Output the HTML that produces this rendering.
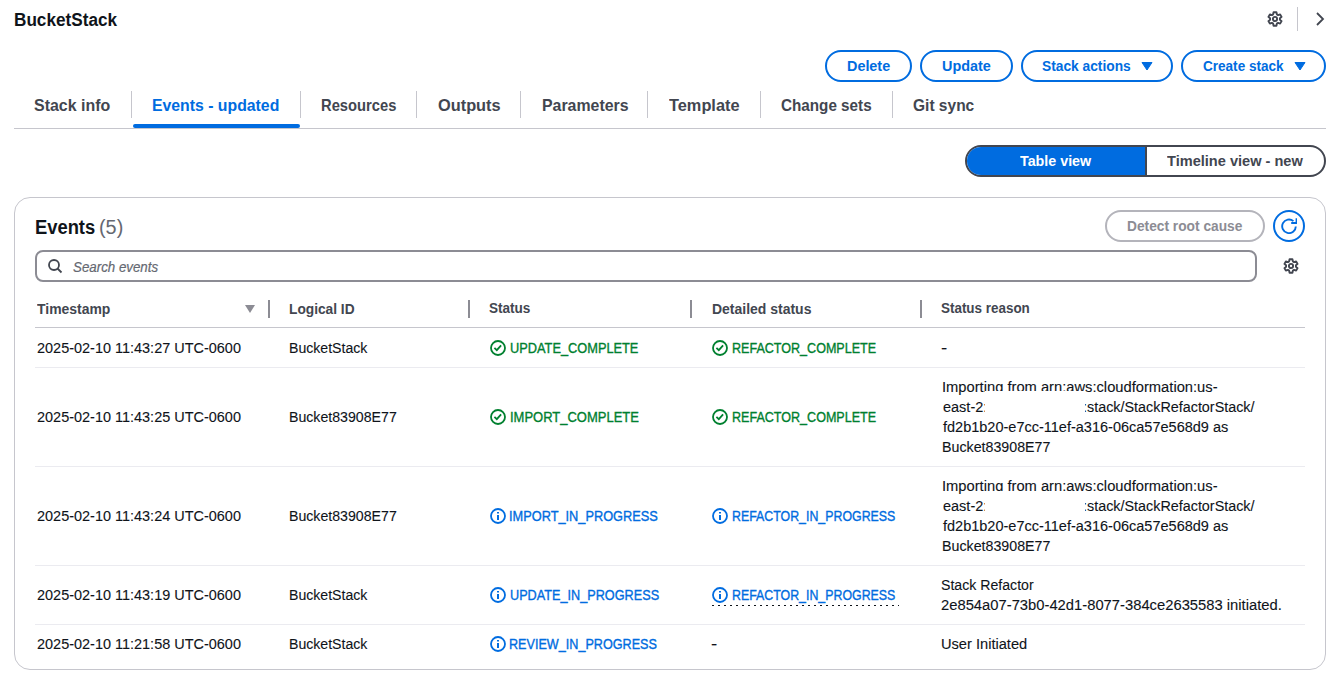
<!DOCTYPE html>
<html><head><meta charset="utf-8">
<style>
*{box-sizing:border-box;margin:0;padding:0}
html,body{width:1344px;height:686px;overflow:hidden;background:#fff;font-family:"Liberation Sans",sans-serif;color:#0f141a}
.abs{position:absolute}

.tx{position:absolute;white-space:nowrap;transform-origin:0 0}
.title{font-size:18px;font-weight:bold;line-height:22px;color:#0f141a}
.btn{font-size:14px;font-weight:bold;line-height:20px;color:#006ce0}
.tab{font-size:16.5px;font-weight:bold;line-height:20px;color:#424650}
.tab.act{color:#006ce0}
.seg{font-size:14px;font-weight:bold;line-height:20px;color:#424650}
.seg.wh{color:#fff}
.h2{font-size:20px;font-weight:bold;line-height:24px;color:#0f141a}
.h2c{font-size:20px;line-height:24px;color:#656871}
.dis{font-size:14px;font-weight:bold;line-height:20px;color:#8c8c94}
.ph{font-size:14px;font-style:italic;line-height:20px;color:#656871;-webkit-text-stroke:0.2px #656871}
.th{font-size:14px;font-weight:bold;line-height:20px;color:#424650}
.td{font-size:14px;line-height:20px;color:#0f141a;-webkit-text-stroke:0.1px #0f141a}
.ok{font-size:14px;line-height:20px;color:#00802f;-webkit-text-stroke:0.35px #00802f}
.info{font-size:14px;line-height:20px;color:#006ce0;-webkit-text-stroke:0.35px #006ce0}

</style></head><body>
<!-- top-right icons -->
<svg class="abs" style="left:1267px;top:11px" width="16" height="16" viewBox="0 0 16 16" overflow="visible"><path d="M6.57 1.25 L9.43 1.25 L9.87 3.36 L11.08 4.06 L13.13 3.38 L14.56 5.87 L12.95 7.30 L12.95 8.70 L14.56 10.13 L13.13 12.62 L11.08 11.94 L9.87 12.64 L9.43 14.75 L6.57 14.75 L6.13 12.64 L4.92 11.94 L2.87 12.62 L1.44 10.13 L3.05 8.70 L3.05 7.30 L1.44 5.87 L2.87 3.38 L4.92 4.06 L6.13 3.36Z" fill="none" stroke="#424650" stroke-width="1.9" stroke-linejoin="round"/><circle cx="8" cy="8" r="2.1" fill="none" stroke="#424650" stroke-width="1.9"/></svg>
<div class="abs" style="left:1297px;top:7px;width:1px;height:24px;background:#c6c6cd"></div>
<svg class="abs" style="left:1314px;top:12px" width="12" height="14" viewBox="0 0 12 14"><path d="M3 1l6 6-6 6" fill="none" stroke="#424650" stroke-width="1.8"/></svg>

<!-- action buttons -->
<div class="abs" style="left:825px;top:50px;width:87px;height:32px;border:2px solid #006ce0;border-radius:16px"></div>
<div class="abs" style="left:920px;top:50px;width:93px;height:32px;border:2px solid #006ce0;border-radius:16px"></div>
<div class="abs" style="left:1021px;top:50px;width:152px;height:32px;border:2px solid #006ce0;border-radius:16px"></div>
<svg class="abs" style="left:1141px;top:61px" width="12" height="10" viewBox="0 0 12 10"><path d="M1 1.5h10L6 9z" fill="#006ce0" stroke="#006ce0" stroke-width="1" stroke-linejoin="round"/></svg>
<div class="abs" style="left:1181px;top:50px;width:145px;height:32px;border:2px solid #006ce0;border-radius:16px"></div>
<svg class="abs" style="left:1294px;top:61px" width="12" height="10" viewBox="0 0 12 10"><path d="M1 1.5h10L6 9z" fill="#006ce0" stroke="#006ce0" stroke-width="1" stroke-linejoin="round"/></svg>

<!-- tabs -->
<div class="abs" style="left:131px;top:91px;width:1px;height:27px;background:#c6c6cd"></div>
<div class="abs" style="left:300px;top:91px;width:1px;height:27px;background:#c6c6cd"></div>
<div class="abs" style="left:416px;top:91px;width:1px;height:27px;background:#c6c6cd"></div>
<div class="abs" style="left:520px;top:91px;width:1px;height:27px;background:#c6c6cd"></div>
<div class="abs" style="left:647px;top:91px;width:1px;height:27px;background:#c6c6cd"></div>
<div class="abs" style="left:760px;top:91px;width:1px;height:27px;background:#c6c6cd"></div>
<div class="abs" style="left:892px;top:91px;width:1px;height:27px;background:#c6c6cd"></div>
<div class="abs" style="left:133px;top:124px;width:167px;height:4px;background:#006ce0;border-radius:2px"></div>
<div class="abs" style="left:14px;top:128px;width:1312px;height:1px;background:#c6c6cd"></div>

<!-- segmented -->
<div class="abs" style="left:965px;top:145px;width:361px;height:32px;border:2px solid #424650;border-radius:16px;overflow:hidden">
  <div class="abs" style="left:0;top:0;width:178px;height:28px;background:#006ce0"></div>
  <div class="abs" style="left:178px;top:0;width:2px;height:28px;background:#424650"></div>
</div>

<!-- container -->
<div class="abs" style="left:14px;top:197px;width:1312px;height:473px;border:1px solid #c6c6cd;border-radius:16px"></div>
<div class="abs" style="left:1105px;top:210px;width:160px;height:32px;border:2px solid #b4b4bb;border-radius:16px"></div>
<div class="abs" style="left:1273px;top:210px;width:32px;height:32px;border:2px solid #006ce0;border-radius:50%"></div>
<svg class="abs" style="left:1281px;top:218px" width="16" height="16" viewBox="0 0 16 16"><path d="M14.8 8.4A6.8 6.8 0 1 1 12.4 3.1" fill="none" stroke="#006ce0" stroke-width="1.9"/><path d="M10.2 5.1H15.6V0.2" fill="none" stroke="#006ce0" stroke-width="2"/></svg>

<div class="abs" style="left:35px;top:250px;width:1222px;height:32px;border:2px solid #8c8c94;border-radius:8px"></div>
<svg class="abs" style="left:47px;top:258px" width="16" height="16" viewBox="0 0 16 16"><circle cx="7" cy="7" r="5" fill="none" stroke="#424650" stroke-width="1.8"/><path d="M10.5 10.5L14.5 14.5" stroke="#424650" stroke-width="1.8"/></svg>
<svg class="abs" style="left:1283px;top:258px" width="16" height="16" viewBox="0 0 16 16" overflow="visible"><path d="M6.57 1.25 L9.43 1.25 L9.87 3.36 L11.08 4.06 L13.13 3.38 L14.56 5.87 L12.95 7.30 L12.95 8.70 L14.56 10.13 L13.13 12.62 L11.08 11.94 L9.87 12.64 L9.43 14.75 L6.57 14.75 L6.13 12.64 L4.92 11.94 L2.87 12.62 L1.44 10.13 L3.05 8.70 L3.05 7.30 L1.44 5.87 L2.87 3.38 L4.92 4.06 L6.13 3.36Z" fill="none" stroke="#424650" stroke-width="1.9" stroke-linejoin="round"/><circle cx="8" cy="8" r="2.1" fill="none" stroke="#424650" stroke-width="1.9"/></svg>

<!-- table header -->
<div class="abs" style="left:245px;top:305px;width:0;height:0;border-left:5px solid transparent;border-right:5px solid transparent;border-top:8px solid #8c8c94"></div>
<div class="abs" style="left:268px;top:300px;width:2px;height:18px;background:#8c8c94"></div>
<div class="abs" style="left:468px;top:300px;width:2px;height:18px;background:#8c8c94"></div>
<div class="abs" style="left:690px;top:300px;width:2px;height:18px;background:#8c8c94"></div>
<div class="abs" style="left:920px;top:300px;width:2px;height:18px;background:#8c8c94"></div>
<div class="abs" style="left:35px;top:327px;width:1270px;height:1px;background:#c6c6cd"></div>
<div class="abs" style="left:35px;top:367px;width:1270px;height:1px;background:#ebebf0"></div>
<div class="abs" style="left:35px;top:466px;width:1270px;height:1px;background:#ebebf0"></div>
<div class="abs" style="left:35px;top:565px;width:1270px;height:1px;background:#ebebf0"></div>
<div class="abs" style="left:35px;top:624px;width:1270px;height:1px;background:#ebebf0"></div>

<!-- status icons -->
<svg class="abs" style="left:490px;top:340px" width="16" height="16" viewBox="0 0 16 16"><circle cx="8" cy="8" r="7" fill="none" stroke="#00802f" stroke-width="1.8"/><path d="M4.4 7.8l2.4 2.3 4.3-4.7" fill="none" stroke="#00802f" stroke-width="1.8"/></svg>
<svg class="abs" style="left:712px;top:340px" width="16" height="16" viewBox="0 0 16 16"><circle cx="8" cy="8" r="7" fill="none" stroke="#00802f" stroke-width="1.8"/><path d="M4.4 7.8l2.4 2.3 4.3-4.7" fill="none" stroke="#00802f" stroke-width="1.8"/></svg>
<svg class="abs" style="left:490px;top:409px" width="16" height="16" viewBox="0 0 16 16"><circle cx="8" cy="8" r="7" fill="none" stroke="#00802f" stroke-width="1.8"/><path d="M4.4 7.8l2.4 2.3 4.3-4.7" fill="none" stroke="#00802f" stroke-width="1.8"/></svg>
<svg class="abs" style="left:712px;top:409px" width="16" height="16" viewBox="0 0 16 16"><circle cx="8" cy="8" r="7" fill="none" stroke="#00802f" stroke-width="1.8"/><path d="M4.4 7.8l2.4 2.3 4.3-4.7" fill="none" stroke="#00802f" stroke-width="1.8"/></svg>
<svg class="abs" style="left:490px;top:508px" width="16" height="16" viewBox="0 0 16 16"><circle cx="8" cy="8" r="7" fill="none" stroke="#006ce0" stroke-width="1.8"/><path d="M8 7v5" stroke="#006ce0" stroke-width="2"/><path d="M8 4v1.6" stroke="#006ce0" stroke-width="2"/></svg>
<svg class="abs" style="left:712px;top:508px" width="16" height="16" viewBox="0 0 16 16"><circle cx="8" cy="8" r="7" fill="none" stroke="#006ce0" stroke-width="1.8"/><path d="M8 7v5" stroke="#006ce0" stroke-width="2"/><path d="M8 4v1.6" stroke="#006ce0" stroke-width="2"/></svg>
<svg class="abs" style="left:490px;top:587px" width="16" height="16" viewBox="0 0 16 16"><circle cx="8" cy="8" r="7" fill="none" stroke="#006ce0" stroke-width="1.8"/><path d="M8 7v5" stroke="#006ce0" stroke-width="2"/><path d="M8 4v1.6" stroke="#006ce0" stroke-width="2"/></svg>
<svg class="abs" style="left:712px;top:587px" width="16" height="16" viewBox="0 0 16 16"><circle cx="8" cy="8" r="7" fill="none" stroke="#006ce0" stroke-width="1.8"/><path d="M8 7v5" stroke="#006ce0" stroke-width="2"/><path d="M8 4v1.6" stroke="#006ce0" stroke-width="2"/></svg>
<svg class="abs" style="left:490px;top:636px" width="16" height="16" viewBox="0 0 16 16"><circle cx="8" cy="8" r="7" fill="none" stroke="#006ce0" stroke-width="1.8"/><path d="M8 7v5" stroke="#006ce0" stroke-width="2"/><path d="M8 4v1.6" stroke="#006ce0" stroke-width="2"/></svg>
<div class="abs" style="left:712px;top:605px;width:187px;height:1px;background:repeating-linear-gradient(to right,#0f141a 0 2px,transparent 2px 6px)"></div>

<div class="tx title" id="t0" style="left:14.05px;top:9.00px;transform:scaleX(0.9533)">BucketStack</div>
<div class="tx btn" id="t1" style="left:847.17px;top:56.00px;transform:scaleX(1.0270)">Delete</div>
<div class="tx btn" id="t2" style="left:942.38px;top:56.00px;transform:scaleX(1.0283)">Update</div>
<div class="tx btn" id="t3" style="left:1042.02px;top:56.00px;transform:scaleX(0.9832)">Stack actions</div>
<div class="tx btn" id="t4" style="left:1203.02px;top:56.00px;transform:scaleX(0.9675)">Create stack</div>
<div class="tx tab" id="t5" style="left:34.41px;top:94.60px;transform:scaleX(0.9668)">Stack info</div>
<div class="tx tab act" id="t6" style="left:152.06px;top:94.60px;transform:scaleX(0.9577)">Events - updated</div>
<div class="tx tab" id="t7" style="left:320.89px;top:94.60px;transform:scaleX(0.8928)">Resources</div>
<div class="tx tab" id="t8" style="left:438.20px;top:94.60px;transform:scaleX(0.9905)">Outputs</div>
<div class="tx tab" id="t9" style="left:541.66px;top:94.60px;transform:scaleX(0.9625)">Parameters</div>
<div class="tx tab" id="t10" style="left:669.00px;top:94.60px;transform:scaleX(0.9901)">Template</div>
<div class="tx tab" id="t11" style="left:781.03px;top:94.60px;transform:scaleX(0.9237)">Change sets</div>
<div class="tx tab" id="t12" style="left:913.18px;top:94.60px;transform:scaleX(0.9407)">Git sync</div>
<div class="tx seg wh" id="t13" style="left:1020.00px;top:151.00px;transform:scaleX(1.0200)">Table view</div>
<div class="tx seg" id="t14" style="left:1167.38px;top:151.00px;transform:scaleX(1.0408)">Timeline view - new</div>
<div class="tx h2" id="t15" style="left:35.08px;top:215.40px;transform:scaleX(0.9175)">Events</div>
<div class="tx h2c" id="t16" style="left:99.47px;top:215.40px;transform:scaleX(0.9914)">(5)</div>
<div class="tx dis" id="t17" style="left:1126.82px;top:216.20px;transform:scaleX(0.9819)">Detect root cause</div>
<div class="tx ph" id="t18" style="left:73.43px;top:257.00px;transform:scaleX(0.9513)">Search events</div>
<div class="tx th" id="t19" style="left:37.40px;top:299.00px;transform:scaleX(0.9959)">Timestamp</div>
<div class="tx th" id="t20" style="left:289.00px;top:299.00px;transform:scaleX(0.9805)">Logical ID</div>
<div class="tx th" id="t21" style="left:489.01px;top:298.00px;transform:scaleX(0.9667)">Status</div>
<div class="tx th" id="t22" style="left:711.60px;top:299.00px;transform:scaleX(0.9981)">Detailed status</div>
<div class="tx th" id="t23" style="left:941.42px;top:298.00px;transform:scaleX(0.9589)">Status reason</div>
<div class="tx td" id="t24" style="left:37.19px;top:337.80px;transform:scaleX(1.0330)">2025-02-10 11:43:27 UTC-0600</div>
<div class="tx td" id="t25" style="left:289.39px;top:337.80px;transform:scaleX(1.0066)">BucketStack</div>
<div class="tx ok" id="t26" style="left:510.21px;top:337.80px;transform:scaleX(0.9136)">UPDATE_COMPLETE</div>
<div class="tx ok" id="t27" style="left:731.88px;top:337.80px;transform:scaleX(0.8963)">REFACTOR_COMPLETE</div>
<div class="tx td" id="t28" style="left:37.19px;top:406.60px;transform:scaleX(1.0330)">2025-02-10 11:43:25 UTC-0600</div>
<div class="tx td" id="t29" style="left:289.40px;top:406.60px;transform:scaleX(1.0104)">Bucket83908E77</div>
<div class="tx ok" id="t30" style="left:510.29px;top:406.60px;transform:scaleX(0.9275)">IMPORT_COMPLETE</div>
<div class="tx ok" id="t31" style="left:731.88px;top:406.60px;transform:scaleX(0.8963)">REFACTOR_COMPLETE</div>
<div class="tx td" id="t32" style="left:37.19px;top:505.60px;transform:scaleX(1.0330)">2025-02-10 11:43:24 UTC-0600</div>
<div class="tx td" id="t33" style="left:289.40px;top:505.60px;transform:scaleX(1.0104)">Bucket83908E77</div>
<div class="tx info" id="t34" style="left:509.31px;top:505.60px;transform:scaleX(0.9124)">IMPORT_IN_PROGRESS</div>
<div class="tx info" id="t35" style="left:731.90px;top:505.60px;transform:scaleX(0.8832)">REFACTOR_IN_PROGRESS</div>
<div class="tx td" id="t36" style="left:37.19px;top:585.20px;transform:scaleX(1.0330)">2025-02-10 11:43:19 UTC-0600</div>
<div class="tx td" id="t37" style="left:289.39px;top:585.20px;transform:scaleX(1.0066)">BucketStack</div>
<div class="tx info" id="t38" style="left:510.21px;top:585.20px;transform:scaleX(0.9055)">UPDATE_IN_PROGRESS</div>
<div class="tx info" id="t39" style="left:731.90px;top:585.20px;transform:scaleX(0.8832)">REFACTOR_IN_PROGRESS</div>
<div class="tx td" id="t40" style="left:37.19px;top:633.80px;transform:scaleX(1.0330)">2025-02-10 11:21:58 UTC-0600</div>
<div class="tx td" id="t41" style="left:289.39px;top:633.80px;transform:scaleX(1.0066)">BucketStack</div>
<div class="tx info" id="t42" style="left:509.32px;top:633.80px;transform:scaleX(0.9012)">REVIEW_IN_PROGRESS</div>
<div class="tx td" id="t43" style="left:711.14px;top:633.80px;transform:scaleX(1.3310)">-</div>
<div class="tx td" id="t44" style="left:941.14px;top:337.80px;transform:scaleX(1.3310)">-</div>
<div class="tx td" id="t45" style="left:941.52px;top:377.00px;transform:scaleX(1.0508)">Importing from arn:aws:cloudformation:us-</div>
<div class="tx td" id="t46" style="left:942.58px;top:397.00px;transform:scaleX(1.0348)">east-2:</div>
<div class="tx td" id="t47" style="left:1083.36px;top:397.00px;transform:scaleX(1.0253)">:stack/StackRefactorStack/</div>
<div class="tx td" id="t48" style="left:942.58px;top:417.00px;transform:scaleX(1.0362)">fd2b1b20-e7cc-11ef-a316-06ca57e568d9 as</div>
<div class="tx td" id="t49" style="left:941.59px;top:437.00px;transform:scaleX(1.0161)">Bucket83908E77</div>
<div class="tx td" id="t50" style="left:941.52px;top:476.00px;transform:scaleX(1.0508)">Importing from arn:aws:cloudformation:us-</div>
<div class="tx td" id="t51" style="left:942.58px;top:496.00px;transform:scaleX(1.0348)">east-2:</div>
<div class="tx td" id="t52" style="left:1083.36px;top:496.00px;transform:scaleX(1.0253)">:stack/StackRefactorStack/</div>
<div class="tx td" id="t53" style="left:942.58px;top:516.00px;transform:scaleX(1.0362)">fd2b1b20-e7cc-11ef-a316-06ca57e568d9 as</div>
<div class="tx td" id="t54" style="left:941.59px;top:536.00px;transform:scaleX(1.0161)">Bucket83908E77</div>
<div class="tx td" id="t55" style="left:941.40px;top:575.20px;transform:scaleX(1.0088)">Stack Refactor</div>
<div class="tx td" id="t56" style="left:941.38px;top:595.20px;transform:scaleX(1.0550)">2e854a07-73b0-42d1-8077-384ce2635583 initiated.</div>
<div class="tx td" id="t57" style="left:941.38px;top:633.80px;transform:scaleX(1.0445)">User Initiated</div>
<div class="abs" style="left:985px;top:391px;width:100px;height:24px;background:#fff"></div><div class="abs" style="left:985px;top:491px;width:100px;height:24px;background:#fff"></div>
</body></html>
